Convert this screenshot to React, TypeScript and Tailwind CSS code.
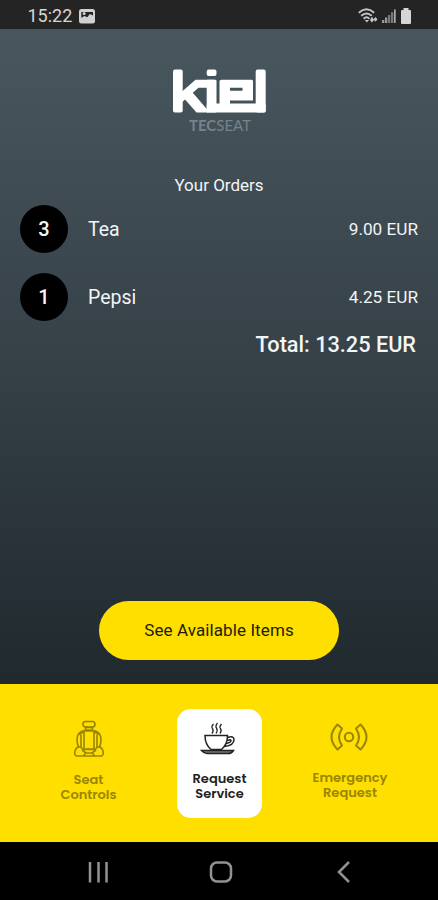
import React from "react";

const roboto = "font-['Roboto','Liberation_Sans',sans-serif]";

function StatusBar() {
  return (
    <header className="flex h-[29px] shrink-0 items-center justify-between bg-[#242424] pt-[3px] pr-[26px] pl-[27.500px] text-[#d6d6d6]">
      <div className="flex items-center gap-[7px]">
        <span className="text-[18px] leading-[20px]">15:22</span>
        <svg width="17" height="15" viewBox="0 0 17 15">
          <rect x="0" y="0" width="16" height="14.5" rx="2.5" fill="#d0d0d0" />
          <path d="M2.300 3V9l3-2 3 1.200 2.500-3.200 3.200 1.500V3z" fill="#242424" />
          <circle cx="5.100" cy="4.600" r="1.500" fill="#d0d0d0" />
        </svg>
      </div>
      <svg width="54" height="17" viewBox="0 0 54 17">
        <g fill="none" stroke="#c4c4c4" strokeWidth="1.900">
          <path d="M0.800 4.700Q8.500-2 16.200 4.700" />
          <path d="M3.200 7.800Q8.500 3 13.800 7.800" />
          <path d="M5.600 10.700Q8.500 8 11.400 10.700" />
        </g>
        <path d="M6.800 12h4.200l-2.100 2.600zM11.800 12l2.200-3.200 2 3.200-2 2.600zM15.500 11.200l2-2.200 2 2.200-2 2.500z" fill="#c4c4c4" />
        <path d="M24 12h2.300v3H24zM27 9.500h2.300V15H27z" fill="#999" />
        <path d="M30 7h2.300v8H30zM33 4.200h2.300V15H33z" fill="#777" />
        <path d="M36 1.500h1.700V15H36z" fill="#aaa" />
        <path d="M45.500 0h5v2H52q1 0 1 1v12q0 1-1 1h-8q-1 0-1-1V3q0-1 1-1h1.500z" fill="#d6d6d6" />
      </svg>
    </header>
  );
}

function Logo() {
  return (
    <div className="flex flex-col items-center">
      <svg width="95" height="45" viewBox="0 0 95 45" role="img" aria-label="kiel" fill="#fff">
        <rect x="1" y="1.500" width="9.700" height="43" rx="2" />
        <path d="M7 31.500L25 15.800H42" fill="none" stroke="#fff" strokeWidth="8" />
        <path d="M16.500 22L10 28L24.500 44.500H36V42.500L21 25z" />
        <rect x="34.700" y="1.500" width="9.800" height="6.500" rx="2" />
        <rect x="34.700" y="11.800" width="9.800" height="32.700" rx="1" />
        <path fillRule="evenodd" d="M49.500 11.800H79.500Q81 11.800 81 13.300V32.500H58V38H47.500V13.300Q47.500 11.800 49.500 11.800zM58 19.700V22.700H70.500V19.700z" />
        <rect x="34.700" y="35.500" width="59" height="9" rx="1.500" />
        <rect x="83.700" y="1.500" width="10" height="43" rx="2" />
      </svg>
      <div className="mt-[4px] ml-[2px] font-['Lato',sans-serif] text-[15px] leading-[16px] text-[#77828a]">
        <b>TEC</b>SEAT
      </div>
    </div>
  );
}

function OrderRow({ count, name, price }: { count: number; name: string; price: string }) {
  return (
    <li className="flex h-[48px] items-center">
      <span className="flex size-[48px] items-center justify-center rounded-full bg-black text-[20px] font-medium">{count}</span>
      <span className="ml-5 pt-[2px] text-[19.500px]">{name}</span>
      <span className="ml-auto pt-[2px] text-[17.200px]">{price}</span>
    </li>
  );
}

function SeatIcon() {
  return (
    <svg width="32" height="38" viewBox="0 0 32 38" fill="none" stroke="currentColor" strokeWidth="1.600">
      <rect x="10" y="1.500" width="12" height="5.500" rx="2.700" />
      <path d="M12.500 7.500h7v2.500h-7zM11 11h10v18H11z" />
      <path d="M11 10.500q-7 1.500-7 9 0 4 1.500 7.500M21 10.500q7 1.500 7 9 0 4-1.500 7.500M8 12.500v15M24 12.500v15M11 11.500l-4.500 3M21 11.500l4.500 3" />
      <path d="M10 29.500L7.500 27Q3.500 26 2 31q-1 4 1.500 5H10l3-3h6l3 3h6.500q2.500-1 1.500-5-1.500-5-5.500-4L22 29.500zM9 30l4 3M23 30l-4 3M10 36h12" />
    </svg>
  );
}

function CupIcon() {
  return (
    <svg className="-ml-[4px]" width="36" height="34" viewBox="0 0 36 34" fill="none" stroke="currentColor" strokeWidth="1.500">
      <path d="M13.500 2q-2.500 2.500-1 4.700T12 11.500M17.500 1q-2.500 3-1 5.200t-.5 5.300M21.500 2q-2.500 2.500-1 4.700t-.5 4.800" strokeWidth="1.300" />
      <path d="M5 13.500h22.500q0 9-6 14H11q-6-5-6-14zM27.500 15.500q6.500-2 6.500 2 0 6-9.500 7M27.500 18.500q3.500-1.500 3.500 0 0 2-4.500 3" />
      <path d="M1.500 28.500h32q-2 3-5 3H7q-3 0-5.500-3z" fill="#777" />
    </svg>
  );
}

function SignalIcon() {
  return (
    <svg className="-ml-[3px]" width="38" height="28" viewBox="0 0 38 28" fill="none" stroke="currentColor" strokeWidth="2" strokeLinejoin="round">
      <circle cx="19" cy="14" r="4.200" />
      <path d="M7.500 1.500q-12 12.500 0 25l4.500-4q-6-8 0-17zM30.500 1.500q12 12.500 0 25l-4.500-4q6-8 0-17z" />
    </svg>
  );
}

function TabLabel({ lines }: { lines: string[] }) {
  return (
    <div className="flex flex-col items-center font-['Poppins','Montserrat','Inter',sans-serif] text-[13px] leading-[15px] font-semibold">
      {lines.map((line) => (
        <span key={line}>{line}</span>
      ))}
    </div>
  );
}

export default function App() {
  return (
    <div className={`flex h-[900px] w-[438px] flex-col overflow-hidden bg-black ${roboto}`}>
      <StatusBar />
      <main className="flex h-[655px] shrink-0 flex-col bg-linear-to-b from-[#48575e] via-[#364148] to-[#1f292e] px-5 pt-[39px] text-[#f3f5f7]">
        <Logo />
        <h1 className="mt-[42px] text-center text-[17px] leading-[20px]">Your Orders</h1>
        <ul className="mt-[10px] flex flex-col gap-5">
          <OrderRow count={3} name="Tea" price="9.00 EUR" />
          <OrderRow count={1} name="Pepsi" price="4.25 EUR" />
        </ul>
        <p className="mt-[11px] pr-[2px] text-right text-[21.700px] leading-[26px] font-medium">Total: 13.25 EUR</p>
        <button className="mt-auto mb-[24px] h-[59px] w-[240px] self-center rounded-full bg-[#ffdf00] text-[17px] tracking-[0.100px] text-[#1c1c00]">
          See Available Items
        </button>
      </main>
      <nav className="flex h-[158px] shrink-0 bg-[#ffdf00] text-[#9a8500]">
        <div className="flex w-[177px] flex-col items-center gap-[14px] pt-[36px]">
          <SeatIcon />
          <TabLabel lines={["Seat", "Controls"]} />
        </div>
        <div className="mt-[25px] flex h-[109px] w-[85px] flex-col items-center gap-[15px] rounded-[14px] bg-white pt-[13px] text-[#222]">
          <CupIcon />
          <TabLabel lines={["Request", "Service"]} />
        </div>
        <div className="flex w-[176px] flex-col items-center gap-[19px] pt-[39px]">
          <SignalIcon />
          <TabLabel lines={["Emergency", "Request"]} />
        </div>
      </nav>
      <footer className="flex h-[58px] shrink-0 items-center bg-black pt-px">
        <svg width="438" height="30" viewBox="0 0 438 30" fill="none" stroke="#929292" strokeWidth="2.500">
          <path d="M90 5v20.500M98.500 5v20.500M106.500 5v20.500" />
          <rect x="211" y="5.500" width="20" height="19" rx="6" />
          <path d="M349 5l-10 10 10 10" />
        </svg>
      </footer>
    </div>
  );
}
